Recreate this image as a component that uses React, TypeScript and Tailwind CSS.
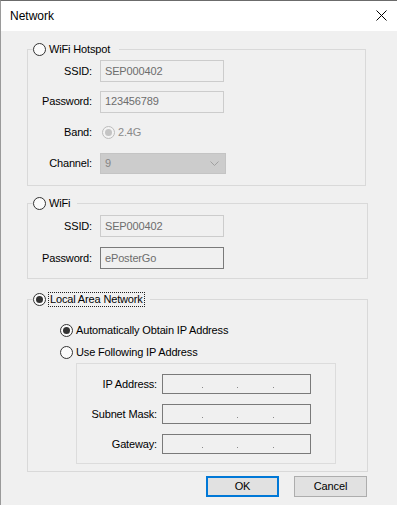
import React from "react";

function Radio({ checked = false, disabled = false }: { checked?: boolean; disabled?: boolean }) {
  const ring = disabled ? "border-[#bcbcbc] bg-[#f3f3f3]" : "border-[#333333] bg-[#fbfbfb]";
  const dot = disabled ? "bg-[#c4c4c4]" : "bg-[#333333]";
  return (
    <span className={`flex h-[13px] w-[13px] shrink-0 items-center justify-center rounded-full border ${ring}`}>
      {checked && <span className={`h-[7px] w-[7px] rounded-full ${dot}`} />}
    </span>
  );
}

function Field({ value, dark = false }: { value: string; dark?: boolean }) {
  return (
    <div
      className={`flex h-[22px] w-[124px] items-center border bg-[#f0f0f0] pl-[4px] text-[#6d6d6d] ${
        dark ? "border-[#7a7a7a]" : "border-[#cccccc]"
      }`}
    >
      {value}
    </div>
  );
}

function Label({ children }: { children: React.ReactNode }) {
  return <div className="w-[64px] shrink-0 text-right">{children}</div>;
}

function IpField() {
  return (
    <div className="flex h-[20px] w-[149px] items-end border border-[#7a7a7a] bg-[#f0f0f0] pb-[5px]">
      <span className="w-[39px]" />
      <span className="h-[1px] w-[1px] bg-[#8a8a8a]" />
      <span className="w-[34px]" />
      <span className="h-[1px] w-[1px] bg-[#8a8a8a]" />
      <span className="w-[35px]" />
      <span className="h-[1px] w-[1px] bg-[#8a8a8a]" />
    </div>
  );
}

export default function App() {
  return (
    <div className="h-[505px] w-[397px] overflow-hidden border-l border-t border-l-[#9a9a9a] border-t-[#6b6b6b] bg-[#f0f0f0] font-['Liberation_Sans',Arial,sans-serif] text-[11px] tracking-[-0.15px] text-black">
      {/* title bar */}
      <div className="flex h-[30px] items-center justify-between bg-white pl-[9px] pr-[10px]">
        <span className="text-[12px] tracking-normal">Network</span>
        <svg width="11" height="11" viewBox="0 0 11 11" className="mt-[-1px]">
          <path d="M0.5 0.5 L10.5 10.5 M10.5 0.5 L0.5 10.5" stroke="#000" strokeWidth="1" fill="none" />
        </svg>
      </div>

      {/* WiFi Hotspot */}
      <fieldset className="ml-[26px] mt-[11px] w-[339px] border border-[#d9d9d9] pb-[6px]">
        <legend className="ml-[5px] flex h-[14px] items-center gap-[3px] pr-[9px]">
          <Radio />
          <span>WiFi Hotspot</span>
        </legend>
        <div className="flex flex-col">
          <div className="flex h-[30px] items-center gap-[8px]">
            <Label>SSID:</Label>
            <Field value="SEP000402" />
          </div>
          <div className="flex h-[31px] items-center gap-[8px]">
            <Label>Password:</Label>
            <Field value="123456789" />
          </div>
          <div className="flex h-[31px] items-center gap-[8px]">
            <Label>Band:</Label>
            <div className="ml-[2px] flex items-center gap-[3px] text-[#8a8a8a]">
              <Radio checked disabled />
              <span>2.4G</span>
            </div>
          </div>
          <div className="flex h-[31px] items-center gap-[8px]">
            <Label>Channel:</Label>
            <div className="flex h-[21px] w-[126px] items-center justify-between border border-[#c4c4c4] bg-[#cccccc] pl-[4px] pr-[6px] text-[#858585]">
              <span>9</span>
              <svg width="9" height="5" viewBox="0 0 9 5">
                <path d="M0.5 0.5 L4.5 4.5 L8.5 0.5" stroke="#a0a0a0" strokeWidth="1" fill="none" />
              </svg>
            </div>
          </div>
        </div>
      </fieldset>

      {/* WiFi */}
      <fieldset className="ml-[26px] mt-[10px] w-[341px] border border-[#d9d9d9] pb-[4px]">
        <legend className="ml-[5px] flex h-[14px] items-center gap-[3px] pr-[7px]">
          <Radio />
          <span>WiFi</span>
        </legend>
        <div className="flex flex-col">
          <div className="flex h-[32px] items-center gap-[8px]">
            <Label>SSID:</Label>
            <Field value="SEP000402" />
          </div>
          <div className="flex h-[32px] items-center gap-[8px]">
            <Label>Password:</Label>
            <Field value="ePosterGo" dark />
          </div>
        </div>
      </fieldset>

      {/* Local Area Network */}
      <fieldset className="ml-[26px] mt-[13px] w-[341px] border border-[#d9d9d9] pb-[7px]">
        <legend className="ml-[5px] flex h-[14px] items-center gap-[2px] pr-[5px]">
          <Radio checked />
          <span className="border border-dotted border-[#222] px-[1px] leading-[13px]">Local Area Network</span>
        </legend>
        <div className="ml-[32px] flex flex-col pt-[13px]">
          <div className="flex h-[22px] items-center gap-[3px]">
            <Radio checked />
            <span>Automatically Obtain IP Address</span>
          </div>
          <div className="flex h-[22px] items-center gap-[3px]">
            <Radio />
            <span>Use Following IP Address</span>
          </div>
          <div className="ml-[16px] flex w-[260px] flex-col gap-[10px] border border-[#dcdcdc] pb-[9px] pt-[10px]">
            {["IP Address:", "Subnet Mask:", "Gateway:"].map((l) => (
              <div key={l} className="flex items-center gap-[5px]">
                <div className="w-[80px] text-right">{l}</div>
                <IpField />
              </div>
            ))}
          </div>
        </div>
      </fieldset>

      {/* buttons */}
      <div className="mt-[4px] flex justify-end gap-[15px] pr-[30px]">
        <button className="flex h-[21px] w-[73px] items-center justify-center border-2 border-[#0078d7] bg-[#e1e1e1]">
          OK
        </button>
        <button className="flex h-[21px] w-[73px] items-center justify-center border border-[#adadad] bg-[#e1e1e1]">
          Cancel
        </button>
      </div>
    </div>
  );
}
